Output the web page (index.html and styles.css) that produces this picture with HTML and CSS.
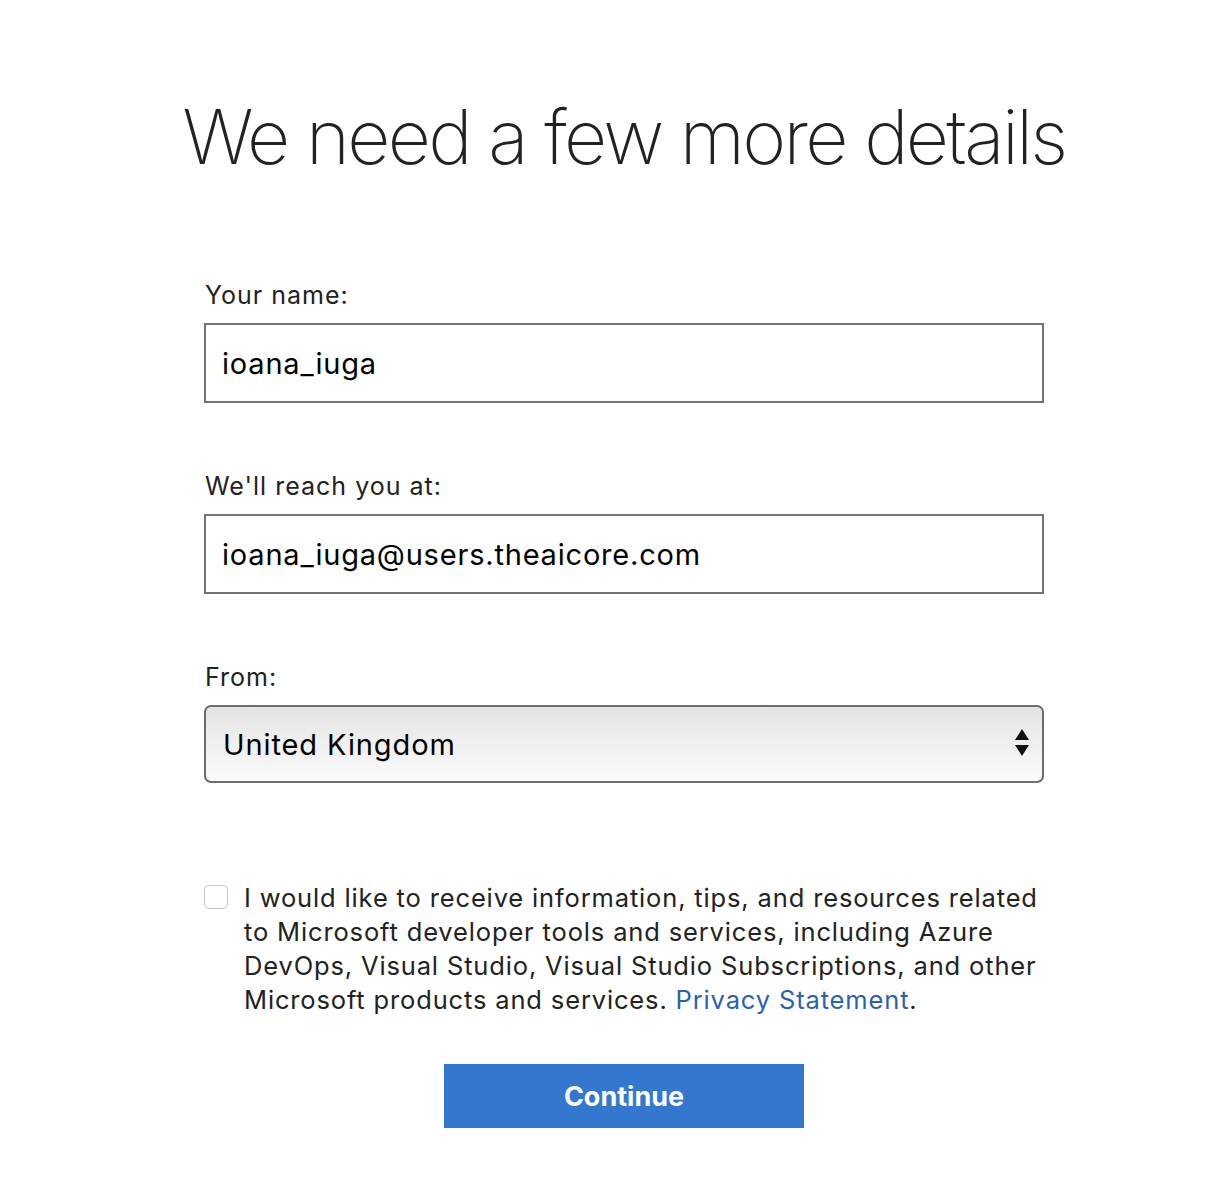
FILE: index.html
```html
<!DOCTYPE html>
<html>
<head>
<meta charset="utf-8">
<link rel="stylesheet" href="styles.css">
</head>
<body>
<div class="page">
  <h1 class="title">We need a few more details</h1>
  <form class="form">
    <div class="field">
      <label class="label">Your name:</label>
      <div class="input">ioana_iuga</div>
    </div>
    <div class="field">
      <label class="label">We'll reach you at:</label>
      <div class="input">ioana_iuga@users.theaicore.com</div>
    </div>
    <div class="field">
      <label class="label">From:</label>
      <div class="select">
        <span>United Kingdom</span>
        <svg class="arrows" width="14" height="30" viewBox="0 0 14 30"><path d="M7 0 L14 11 L0 11 Z" fill="#111"/><path d="M0 16 L14 16 L7 27 Z" fill="#111"/></svg>
      </div>
    </div>
    <div class="consent">
      <span class="checkbox"></span>
      <p class="consent-text">I would like to receive information, tips, and resources related to Microsoft developer tools and services, including Azure DevOps, Visual Studio, Visual Studio Subscriptions, and other Microsoft products and services. <a class="link" href="#">Privacy Statement</a>.</p>
    </div>
    <div class="actions">
      <button type="button" class="btn">Continue</button>
    </div>
  </form>
</div>
</body>
</html>
```
FILE: styles.css
```css
html, body { margin: 0; padding: 0; background: #fff; }
body { font-family: Inter, "Noto Sans", sans-serif; color: #222; padding-left: 30px; }
.page { width: 840px; margin: 0 auto; }
.title {
  margin: 0; padding-top: 92px;
  font-weight: 200; font-size: 75px; line-height: 90px;
  letter-spacing: -2.7px; text-align: center; color: #222;
  white-space: nowrap; margin-left: -40px; margin-right: -40px;
}
.form { margin-top: 98px; }
.field + .field { margin-top: 68px; }
.label { display: block; font-size: 25px; line-height: 30px; margin-bottom: 13px; padding-left: 1px; color: #222; letter-spacing: 1px; }
.input {
  box-sizing: border-box; height: 80px; border: 2px solid #747474;
  padding: 0 16px; display: flex; align-items: center;
  font-size: 29px; color: #000; letter-spacing: 0.8px;
}
.select {
  box-sizing: border-box; height: 78px; border: 2px solid #6e6e6e; border-radius: 7px;
  padding: 0 13px 0 17px; display: flex; align-items: center; justify-content: space-between;
  font-size: 29px; line-height: 1; color: #000; letter-spacing: 0.9px;
  background: linear-gradient(#e3e3e3 0%, #efefef 45%, #f0f0f0 55%, #fbfbfb 100%);
}
.consent { display: flex; gap: 16px; margin-top: 98px; align-items: flex-start; }
.checkbox {
  flex: none; width: 22px; height: 22px; border: 1px solid #c4c4c4; border-radius: 5px;
  margin-top: 4px; background: #fff;
}
.consent-text { margin: 0; font-size: 25.5px; line-height: 34px; color: #222; letter-spacing: 0.85px; }
.link { color: #2a62ad; text-decoration: none; }
.actions { display: flex; justify-content: center; margin-top: 47px; }
.btn {
  width: 360px; height: 64px; border: none; background: #3477cf; color: #fff;
  font-family: Inter, sans-serif; font-weight: 700; font-size: 27px; padding: 0;
}
```
